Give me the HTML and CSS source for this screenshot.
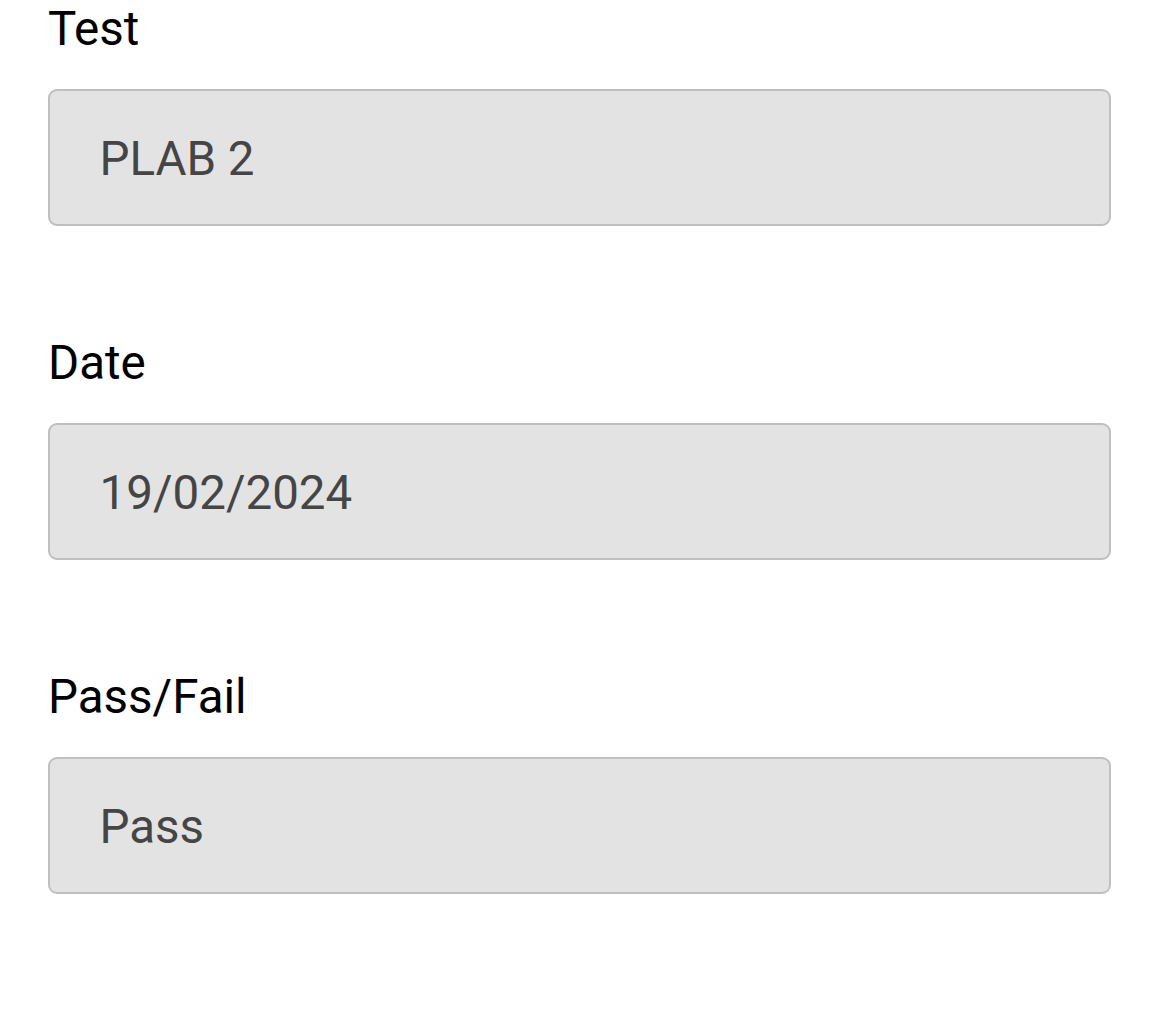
FILE: index.html
```html
<!DOCTYPE html>
<html lang="en">
<head>
<meta charset="utf-8">
<title>Result</title>
<link rel="stylesheet" href="styles.css">
</head>
<body>
<main class="form">
  <div class="field">
    <div class="label">Test</div>
    <div class="box">PLAB 2</div>
  </div>
  <div class="field">
    <div class="label">Date</div>
    <div class="box">19/02/2024</div>
  </div>
  <div class="field">
    <div class="label">Pass/Fail</div>
    <div class="box">Pass</div>
  </div>
</main>
</body>
</html>
```

FILE: styles.css
```css
html, body {
  margin: 0;
  padding: 0;
  background: #ffffff;
}

body {
  font-family: Roboto, "Liberation Sans", sans-serif;
  font-size: 47.5px;
  line-height: 54px;
}

.form {
  display: flex;
  flex-direction: column;
  gap: 110px;
  padding: 2px 59px 0 48px;
}

.field {
  display: flex;
  flex-direction: column;
  gap: 33px;
}

.label {
  color: #000000;
  height: 54px;
}

.box {
  box-sizing: border-box;
  height: 137px;
  background: #e3e3e3;
  border: 2.5px solid #bfbfbf;
  border-radius: 9px;
  color: #454545;
  padding: 41px 0 0 49.5px;
}
```
